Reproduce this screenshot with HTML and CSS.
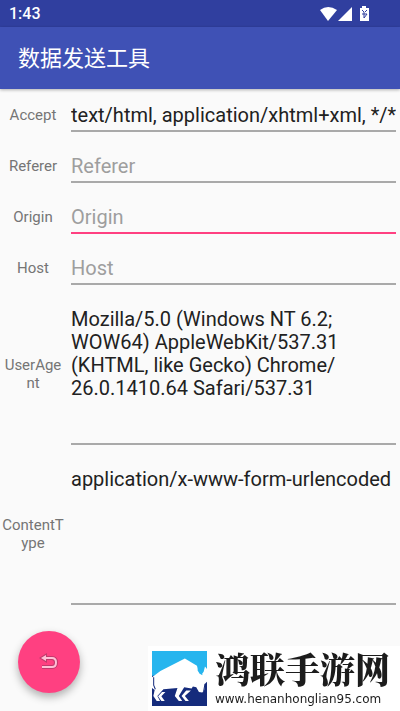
FILE: index.html
```html
<!DOCTYPE html>
<html lang="zh-CN">
<head>
<meta charset="utf-8">
<meta name="viewport" content="width=device-width, initial-scale=1">
<title>数据发送工具</title>
<link rel="stylesheet" href="styles.css">
</head>
<body>
<div class="status">
  <span>1:43</span>
  <svg class="status-icons" viewBox="0 0 50 16" aria-hidden="true">
    <path d="M0 4Q8-2 17 4L8 15Z"/>
    <path d="M32 1V15H18Z"/>
    <path d="M42 0h4v2h3v13h-9V2h2Z"/>
    <path class="bolt" d="M42 4l2 2M47 4l-2 2M42 8h5l-3 4v-6"/>
  </svg>
</div>
<header class="appbar"><h1>数据发送工具</h1></header>
<main>
  <form class="form">
    <div class="row"><label for="accept">Accept</label><input id="accept" type="text" value="text/html, application/xhtml+xml, */*"></div>
    <div class="row"><label for="referer">Referer</label><input id="referer" type="text" placeholder="Referer"></div>
    <div class="row"><label for="origin">Origin</label><input id="origin" class="active" type="text" placeholder="Origin"></div>
    <div class="row"><label for="host">Host</label><input id="host" type="text" placeholder="Host"></div>
    <div class="row tall"><label for="agent">UserAgent</label><textarea id="agent">Mozilla/5.0 (Windows NT 6.2; WOW64) AppleWebKit/537.31 (KHTML, like Gecko) Chrome/
26.0.1410.64 Safari/537.31</textarea></div>
    <div class="row tall"><label for="type">ContentType</label><textarea id="type">application/x-www-form-urlencoded</textarea></div>
  </form>
</main>
<button class="fab" type="button" aria-label="返回">
  <svg viewBox="0 0 20 18" aria-hidden="true">
    <path class="edge" d="M6 5H13Q17 5 17 9.500T13 14H3"/>
    <path class="edge-head" d="M8 0V10L0 5Z"/>
    <path class="line" d="M6 5H13Q17 5 17 9.500T13 14H3"/>
    <path class="head" d="M7 2V8L2 5Z"/>
  </svg>
</button>
<aside class="brand">
  <svg viewBox="0 0 164 164" aria-hidden="true">
    <path fill="#27b5ee" d="M0 0H164V164H0Z"/>
    <path fill="#152b7c" d="M0 74H164V164H0Z"/>
    <path fill="#fff" d="M6 74L25 60L98 22L134 44L137 56L148 70L154 62L158 46L164 54V92L158 98L156 116L150 124L140 122L132 108L122 106L118 112L96 108L90 118L80 134L90 149H80L68 134L76 110L34 114L16 134L24 149H14L4 134L8 116L0 110V78Z"/>
    <path fill="#27b5ee" d="M146 34L138 44L136 58L142 68L151 72L146 60L148 52L154 46L148 40ZM154 40L164 50V36Z"/>
    <path fill="#fff" d="M30 122H40L28 135L38 149H28L18 135ZM102 118H116L98 134L110 149H100L88 134Z"/>
    <path fill="none" stroke="#152b7c" stroke-width="3" d="M5 78V102L10 114M158 98L154 120"/>
  </svg>
  <div class="brand-text"><strong>鸿联手游网</strong><span>www.henanhonglian95.com</span></div>
</aside>
</body>
</html>
```

FILE: styles.css
```css
* { box-sizing: border-box; }
body {
  margin: 0;
  min-height: 100vh;
  background: #fafafa;
  color: #212121;
  font-family: Roboto, "Noto Sans CJK SC", sans-serif;
}
.status {
  display: flex;
  align-items: center;
  justify-content: space-between;
  height: 27px;
  padding: 0 30px 0 9px;
  background: #303f9f;
  color: #fff;
  font-size: 16px;
  font-weight: 500;
}
.status-icons { width: 50px; height: 16px; fill: #fff; }
.status-icons .bolt { fill: none; stroke: #303f9f; }
.appbar {
  display: flex;
  align-items: center;
  height: 62px;
  padding: 0 18px 4px;
  background: #3f51b5;
  color: #fff;
  box-shadow: 0 1px 3px rgba(0, 0, 0, .3);
}
.appbar h1 { margin: 0; font-size: 22px; font-weight: 400; }
.form { padding: 1px 4px 0 1px; }
.row {
  display: flex;
  align-items: center;
  gap: 6px;
  min-height: 51px;
  padding: 10px 0 9px;
}
.row label {
  flex: 0 0 64px;
  padding-bottom: 2px;
  color: #757575;
  font-size: 15px;
  line-height: 18px;
  text-align: center;
  word-break: break-all;
}
.row input, .row textarea {
  display: block;
  flex: 1;
  min-width: 0;
  height: 32px;
  margin: 0;
  padding: 0;
  border: 0;
  border-bottom: 2px solid #a9a9a9;
  border-radius: 0;
  outline: 0;
  background: transparent;
  color: #212121;
  font-family: inherit;
  font-size: 20px;
  line-height: 23px;
}
.row textarea { height: 141px; padding-top: 4px; resize: none; overflow: hidden; }
.row input::placeholder { color: #9e9e9e; }
.row input.active { border-color: #ff4081; }
.fab {
  position: fixed;
  left: 18px;
  bottom: 18px;
  display: grid;
  place-items: center;
  width: 62px;
  height: 62px;
  padding: 0;
  border: 0;
  border-radius: 50%;
  background: #ff4081;
  box-shadow: 0 4px 8px rgba(0, 0, 0, .3);
}
.fab svg { width: 20px; height: 18px; fill: none; }
.fab .edge { stroke: #c23a6c; stroke-width: 4; }
.fab .edge-head { fill: #c23a6c; }
.fab .line { stroke: #ffc0d6; stroke-width: 2; }
.fab .head { fill: #ffc0d6; }
.brand {
  position: fixed;
  right: 0;
  bottom: 0;
  display: flex;
  align-items: center;
  gap: 8px;
  height: 65px;
  padding: 0 10px 0 4px;
  background: #fff;
  color: #1c1c1c;
}
.brand svg { width: 55px; height: 55px; }
.brand-text { display: flex; flex-direction: column; gap: 4px; }
.brand strong { font-family: "Noto Serif CJK SC", "Noto Sans CJK SC", serif; font-size: 35px; font-weight: 900; line-height: 36px; }
.brand span { font-family: "DejaVu Sans", sans-serif; font-size: 12px; line-height: 18px; }
```
